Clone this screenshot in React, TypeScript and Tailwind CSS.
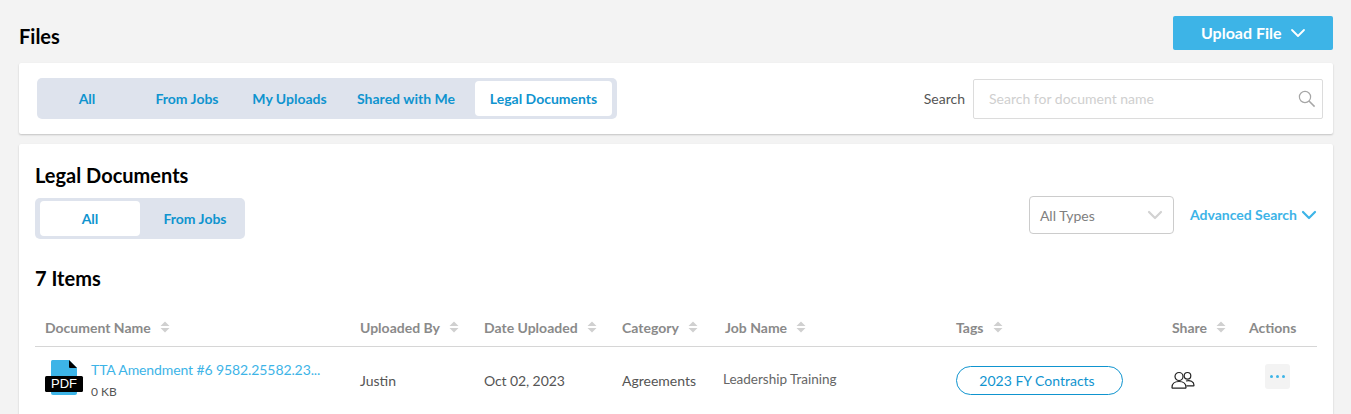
import React from 'react'
import { ChevronDown } from 'lucide-react'

const tabs = [
  { label: 'All', width: 'w-[90px]' },
  { label: 'From Jobs', width: 'w-[110px]' },
  { label: 'My Uploads', width: 'w-[95px]' },
  { label: 'Shared with Me', width: 'w-[138px]' },
  { label: 'Legal Documents', width: 'w-[137px] bg-white' },
]
const columns = ['Document Name', 'Uploaded By', 'Date Uploaded', 'Category', 'Job Name', 'Tags', 'Share']
const grid = 'grid grid-cols-[315px_124px_138px_103px_231px_216px_77px_1fr] px-[10px]'

const SortIcon = () => (
  <svg width="10" height="12" viewBox="0 0 10 12" className="shrink-0 ml-[9px]">
    <path d="M5 0.5 L9.5 5 H0.5 Z M0.5 7 H9.5 L5 11.5 Z" fill="#d0d0d0" />
  </svg>
)

const SearchIcon = () => (
  <svg width="18" height="18" viewBox="0 0 18 18" fill="none" stroke="#a6a6a6" strokeWidth="1.2" className="shrink-0">
    <circle cx="7" cy="7" r="5.6" />
    <path d="M11 11 L16.6 16.6" strokeWidth="1.5" />
  </svg>
)

const PdfIcon = () => (
  <div className="relative w-[39px] h-[36px] shrink-0">
    <svg width="39" height="36" viewBox="0 0 39 36" className="block">
      <path d="M6 1.5 a1.5 1.5 0 0 1 1.5 -1.5 H24 L32 8 V33 a2 2 0 0 1 -2 2 H8 a2 2 0 0 1 -2 -2 Z" fill="#3db4e7" />
      <path d="M24 0 L32 8 H25 a1 1 0 0 1 -1 -1 Z" fill="#000000" />
      <rect x="0" y="16" width="38" height="16" rx="1.5" fill="#000000" />
    </svg>
    <span className="absolute left-0 top-[16px] w-[38px] h-[16px] text-center text-[13px] leading-[16px] text-white font-['Liberation_Sans',sans-serif]">PDF</span>
  </div>
)

const ShareIcon = () => (
  <svg width="24" height="18" viewBox="0 0 24 18" fill="none" stroke="#222222" strokeWidth="1.2" className="block -ml-px">
    <circle cx="8" cy="5.5" r="4" fill="#ffffff" />
    <path d="M1 16.5 c0 -4 3 -6 7 -6 s7 2 7 6 a0.7 0.7 0 0 1 -0.7 0.7 H1.7 a0.7 0.7 0 0 1 -0.7 -0.7 Z" fill="#ffffff" />
    <circle cx="16.5" cy="4.8" r="3.3" />
    <path d="M15 10 c4 -1.2 8 0.5 8 4.3 a0.6 0.6 0 0 1 -0.6 0.6 H15.5" />
  </svg>
)

const App = () => {
  return (
    <div className="h-[414px] overflow-hidden bg-[#f3f3f3] font-['Lato',sans-serif]">
      <div className="flex items-start justify-between pl-[19px] pr-[18px] pt-[16px] h-[63px]">
        <h1 className="mt-[7px] text-[20px] leading-[27px] font-bold text-black">Files</h1>
        <button className="flex items-center gap-[4px] w-[160px] h-[34px] pl-[28px] rounded-[2px] bg-[#3db4e7] text-white text-[16px] font-bold">
          Upload File
          <ChevronDown size={24} strokeWidth={1.8} />
        </button>
      </div>

      <div className="ml-[19px] mr-[18px] h-[71px] flex items-center justify-between pl-[18px] pr-[10px] bg-white rounded-[2px] shadow-[0_1px_2px_rgba(0,0,0,0.2)]">
        <div className="flex items-center w-[580px] h-[41px] px-[5px] bg-[#dee3ed] rounded-[5px]">
          {tabs.map((tab) => (
            <div
              key={tab.label}
              className={'h-[35px] flex items-center justify-center text-[14px] font-bold text-[#0f94cf] rounded-[4px] ' + tab.width}
            >
              {tab.label}
            </div>
          ))}
        </div>
        <div className="flex items-center gap-[8px] mt-px">
          <span className="-mt-px text-[14px] text-[#555555]">Search</span>
          <div className="w-[350px] h-[40px] flex items-center justify-between pl-[15px] pr-[6px] bg-white border border-[#dcdcdc] rounded-[2px]">
            <span className="-mt-[2px] text-[14px] text-[#cfcfcf]">Search for document name</span>
            <SearchIcon />
          </div>
        </div>
      </div>

      <div className="mt-[10px] ml-[19px] mr-[18px] h-[280px] pt-[19px] px-[16px] bg-white rounded-[2px] shadow-[0_1px_2px_rgba(0,0,0,0.2)]">
        <h2 className="text-[20px] leading-[25px] font-bold text-black">Legal Documents</h2>
        <div className="flex items-start justify-between mt-[10px]">
          <div className="flex items-center w-[210px] h-[41px] px-[5px] bg-[#dee3ed] rounded-[5px]">
            <div className="w-[100px] h-[35px] flex items-center justify-center bg-white rounded-[4px] text-[14px] font-bold text-[#0f94cf]">All</div>
            <div className="w-[100px] h-[35px] flex items-center justify-center pl-[10px] text-[14px] font-bold text-[#0f94cf]">From Jobs</div>
          </div>
          <div className="flex items-center -mt-[2px]">
            <div className="w-[145px] h-[38px] flex items-center justify-between pl-[10px] pr-[6px] border border-[#cccccc] rounded-[4px]">
              <span className="text-[14px] text-[#808080]">All Types</span>
              <ChevronDown size={24} strokeWidth={2.2} className="text-[#d2d2d2]" />
            </div>
            <div className="ml-[16px] flex items-center text-[14px] font-bold text-[#3db4e7] -mt-[1px] -mr-[4px]">
              Advanced Search
              <ChevronDown size={24} strokeWidth={2.2} />
            </div>
          </div>
        </div>

        <h3 className="mt-[26px] text-[20px] leading-[27px] font-bold text-black">7 Items</h3>

        <div className={grid + ' mt-[16px] h-[39px] items-center border-b border-[#d6d6d6] text-[14px] font-bold text-[#8a8a8a]'}>
          {columns.map((label) => (
            <div key={label} className="flex items-center">
              {label}
              <SortIcon />
            </div>
          ))}
          <div>Actions</div>
        </div>

        <div className={grid + ' h-[66px] items-center text-[14px] text-[#555555]'}>
          <div className="flex items-center gap-[7px] -mt-[4px]">
            <PdfIcon />
            <div className="mt-[3px]">
              <div className="text-[14px] leading-[20px] tracking-[-0.1px] text-[#3db4e7]">TTA Amendment #6 9582.25582.23...</div>
              <div className="mt-[5px] text-[12px] leading-[14px] text-[#555555]">0 KB</div>
            </div>
          </div>
          <div>Justin</div>
          <div className="tracking-[-0.1px]">Oct 02, 2023</div>
          <div>Agreements</div>
          <div className="-ml-[2px] -mt-[1px] text-[13.5px] text-[#666666]">Leadership Training</div>
          <div>
            <div className="w-[167px] h-[29px] flex items-center justify-center pr-[5px] rounded-full border border-[#0f94cf] text-[14px] text-[#0f94cf]">2023 FY Contracts</div>
          </div>
          <div><ShareIcon /></div>
          <div className="pl-[16px] -mt-[8px]">
            <div className="w-[25px] h-[25px] flex items-center justify-center gap-[3px] bg-[#f3f3f3] rounded-[3px]">
              <span className="w-[3px] h-[3px] rounded-full bg-[#3db4e7]" />
              <span className="w-[3px] h-[3px] rounded-full bg-[#3db4e7]" />
              <span className="w-[3px] h-[3px] rounded-full bg-[#3db4e7]" />
            </div>
          </div>
        </div>
      </div>
    </div>
  )
}

export default App
